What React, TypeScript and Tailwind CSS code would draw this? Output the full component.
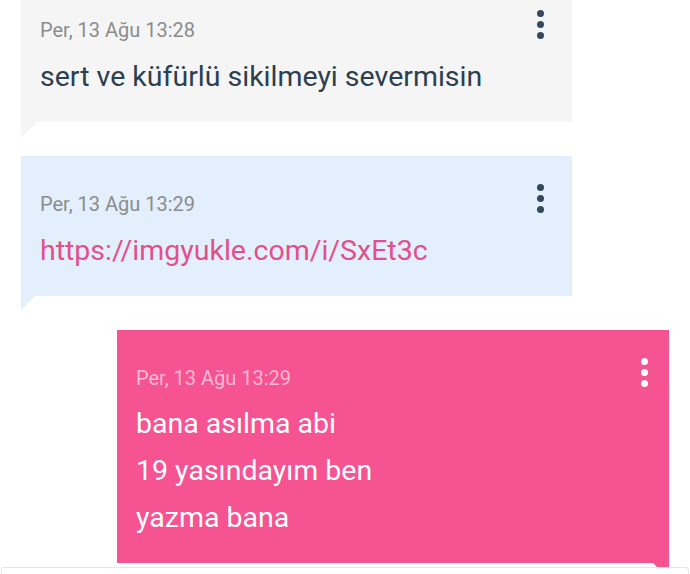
import React from "react";

function Kebab({ color, right }: { color: string; right: string }) {
  return (
    <div className={`absolute top-[28px] ${right} flex flex-col gap-[4px]`}>
      <span className={`block w-[7px] h-[7px] rounded-full ${color}`} />
      <span className={`block w-[7px] h-[7px] rounded-full ${color}`} />
      <span className={`block w-[7px] h-[7px] rounded-full ${color}`} />
    </div>
  );
}

export default function App() {
  return (
    <div className="w-[690px] h-[574px] overflow-hidden bg-white font-['Roboto',sans-serif]">
      <div className="flex flex-col -mt-[18px]">
        {/* Gray incoming bubble */}
        <div className="relative ml-[21px] w-[551px] bg-[#f5f5f5] pl-[19px] pt-[34px] pb-[22px]">
          <div className="text-[20px] leading-[28px] text-[#8c8c8c]">Per, 13 Ağu 13:28</div>
          <div className="mt-[9px] text-[28.5px] leading-[47px] text-[#2c3e50]">
            sert ve küfürlü sikilmeyi severmisin
          </div>
          <Kebab color="bg-[#34495e]" right="right-[28px]" />
          <div className="absolute left-0 top-full w-0 h-0 border-t-[16px] border-t-[#f5f5f5] border-r-[16px] border-r-transparent" />
        </div>

        {/* Blue incoming bubble */}
        <div className="relative mt-[34px] ml-[21px] w-[551px] bg-[#e3effc] pl-[19px] pt-[34px] pb-[22px]">
          <div className="text-[20px] leading-[28px] text-[#8c8c8c]">Per, 13 Ağu 13:29</div>
          <div className="mt-[9px] text-[28.5px] leading-[47px] text-[#e2508b]">
            https://imgyukle.com/i/SxEt3c
          </div>
          <Kebab color="bg-[#34495e]" right="right-[28px]" />
          <div className="absolute left-0 top-full w-0 h-0 border-t-[14px] border-t-[#e3effc] border-r-[14px] border-r-transparent" />
        </div>

        {/* Pink outgoing bubble */}
        <div className="relative mt-[34px] ml-[117px] w-[552px] bg-[#f55391] pl-[19px] pt-[34px] pb-[22px]">
          <div className="text-[20px] leading-[28px] text-[#fcb9d3]">Per, 13 Ağu 13:29</div>
          <div className="mt-[8px] text-[28.5px] leading-[47px] text-white">
            <div>bana asılma abi</div>
            <div>19 yasındayım ben</div>
            <div>yazma bana</div>
          </div>
          <Kebab color="bg-white" right="right-[21px]" />
          <div className="absolute right-0 top-full w-0 h-0 border-t-[16px] border-t-[#f55391] border-l-[16px] border-l-transparent" />
        </div>

        {/* Input box */}
        <div className="relative z-10 mt-[4px] mx-[1px] h-[40px] bg-white border border-[#e6e6e6] rounded-[3px]" />
      </div>
    </div>
  );
}
